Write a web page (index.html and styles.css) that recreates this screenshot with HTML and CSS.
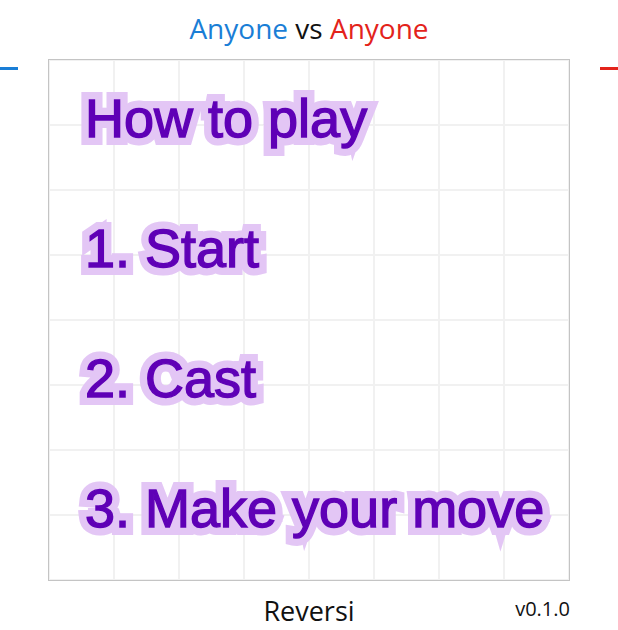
FILE: index.html
```html
<!DOCTYPE html>
<html lang="en">
<head>
<meta charset="utf-8">
<title>Reversi</title>
<link rel="stylesheet" href="styles.css">
</head>
<body>
<div class="app">
  <h1 class="title"><span class="p1">Anyone</span> vs <span class="p2">Anyone</span></h1>
  <div class="arena">
    <div class="marker marker-blue"></div>
    <div class="board">
      <div class="howto">
        <div class="howto-line"><span class="halo" aria-hidden="true">How to play</span><span class="ink">How to play</span></div>
        <div class="howto-line"><span class="halo" aria-hidden="true">1. Start</span><span class="ink">1. Start</span></div>
        <div class="howto-line"><span class="halo" aria-hidden="true">2. Cast</span><span class="ink">2. Cast</span></div>
        <div class="howto-line"><span class="halo" aria-hidden="true">3. Make your move</span><span class="ink">3. Make your move</span></div>
      </div>
    </div>
    <div class="marker marker-red"></div>
  </div>
  <footer class="footer">
    <span></span>
    <span class="name">Reversi</span>
    <span class="version">v0.1.0</span>
  </footer>
</div>
</body>
</html>
```

FILE: styles.css
```css
html, body {
  margin: 0;
  padding: 0;
  background: #ffffff;
}

.app {
  width: 618px;
  height: 630px;
  font-family: "Open Sans", "Noto Sans", sans-serif;
  color: #111111;
}

.title {
  margin: 0;
  padding-top: 9px;
  height: 50px;
  font-size: 28px;
  line-height: 38px;
  font-weight: 400;
  text-align: center;
  color: #111111;
}

.p1 { color: #1a7ed6; }
.p2 { color: #e3231b; }

.arena {
  display: flex;
  justify-content: space-between;
  align-items: flex-start;
}

.marker {
  width: 18px;
  height: 3px;
  margin-top: 8px;
}
.marker-blue { background: #1a7ed6; }
.marker-red { background: #e3231b; }

.board {
  position: relative;
  width: 520px;
  height: 520px;
  border: 1px solid #c4c4c4;
  background-color: #ffffff;
  background-image:
    linear-gradient(to right, #f1f1f1 2px, transparent 2px),
    linear-gradient(to bottom, #f1f1f1 2px, transparent 2px);
  background-size: 65px 65px;
  background-position: 64px 64px;
}

.howto {
  position: absolute;
  top: -7px;
  left: 36px;
  font-family: "Liberation Sans", Arial, sans-serif;
  font-size: 54px;
  line-height: 130px;
  white-space: nowrap;
}

.howto-line {
  display: grid;
}

.halo,
.ink {
  grid-area: 1 / 1;
}

.halo {
  color: #e3c6f5;
  -webkit-text-stroke: 16px #e3c6f5;
}

.ink {
  color: #5f00b6;
  -webkit-text-stroke: 1.4px #5f00b6;
}

.footer {
  width: 522px;
  margin: 12px auto 0;
  display: grid;
  grid-template-columns: 1fr auto 1fr;
  align-items: start;
}

.name {
  font-size: 27px;
  line-height: 36px;
  color: #111111;
}

.version {
  justify-self: end;
  font-size: 20px;
  line-height: 28px;
  margin-top: 2px;
  color: #111111;
}
```
